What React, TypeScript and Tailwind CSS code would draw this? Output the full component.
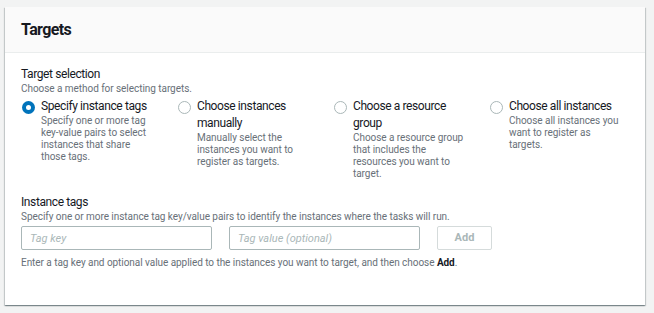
import React, { useState } from 'react';

const options = [
  {
    id: 'tags',
    label: 'Specify instance tags',
    desc: 'Specify one or more tag key-value pairs to select instances that share those tags.',
  },
  {
    id: 'manual',
    label: 'Choose instances manually',
    desc: 'Manually select the instances you want to register as targets.',
  },
  {
    id: 'group',
    label: 'Choose a resource group',
    desc: 'Choose a resource group that includes the resources you want to target.',
  },
  {
    id: 'all',
    label: 'Choose all instances',
    desc: 'Choose all instances you want to register as targets.',
  },
];

const Radio = ({ checked }: { checked: boolean }) =>
  checked ? (
    <span className="mt-[3px] flex h-[13px] w-[13px] shrink-0 items-center justify-center rounded-full bg-[#0073bb]">
      <span className="h-[5px] w-[5px] rounded-full bg-white" />
    </span>
  ) : (
    <span className="mt-[3px] h-[13px] w-[13px] shrink-0 rounded-full border border-[#aab7b8] bg-white" />
  );

export default function App() {
  const [selected, setSelected] = useState('tags');

  return (
    <div className="min-h-screen bg-[#f2f3f3] pl-[5px] pr-[9px] pt-[7px] font-['Roboto',sans-serif] text-[#16191f]">
      <div className="h-[298px] bg-white shadow-[0_1px_1px_0_rgba(0,28,36,0.3),1px_1px_1px_0_rgba(0,28,36,0.15),-1px_1px_1px_0_rgba(0,28,36,0.15)]">
        {/* Header */}
        <div className="flex h-[46px] items-center border-b border-[#eaeded] bg-[#fafafa] px-4 pt-[1px]">
          <h2 className="text-[16px] font-bold leading-none tracking-[-0.6px]">Targets</h2>
        </div>

        <div className="px-4 pt-[14px]">
          <div className="text-[12px] leading-[15px] tracking-[-0.4px]">Target selection</div>
          <div className="text-[10px] leading-[13px] tracking-[-0.05px] text-[#687078]">Choose a method for selecting targets.</div>

          <div className="mt-[3px] grid grid-cols-[156px_156px_156px_1fr]">
            {options.map((o) => (
              <label key={o.id} className="flex cursor-pointer gap-[6px] pl-[1px]" onClick={() => setSelected(o.id)}>
                <Radio checked={selected === o.id} />
                <div className="w-[116px]">
                  <div className="text-[12px] leading-[17px] tracking-[-0.4px]">{o.label}</div>
                  <div className="text-[10px] leading-[12px] tracking-[-0.05px] text-[#687078]">{o.desc}</div>
                </div>
              </label>
            ))}
          </div>

          <div className="mt-[15px] text-[12px] leading-[15px] tracking-[-0.4px]">Instance tags</div>
          <div className="text-[10px] leading-[13px] tracking-[-0.05px] text-[#687078]">
            Specify one or more instance tag key/value pairs to identify the instances where the tasks will run.
          </div>

          <div className="mt-[3px] flex gap-[17px]">
            <input
              placeholder="Tag key"
              className="h-[24px] w-[191px] rounded-[2px] border border-[#aab7b8] px-[8px] text-[11px] italic outline-none placeholder:text-[#aab7b8]"
            />
            <input
              placeholder="Tag value (optional)"
              className="h-[24px] w-[191px] rounded-[2px] border border-[#aab7b8] px-[8px] text-[11px] italic outline-none placeholder:text-[#aab7b8]"
            />
            <button className="h-[24px] w-[55px] rounded-[2px] border border-[#d5dbdb] bg-white text-[11px] font-bold text-[#aab7b8]">
              Add
            </button>
          </div>

          <div className="mt-[6px] text-[10px] leading-[13px] tracking-[-0.05px] text-[#687078]">
            Enter a tag key and optional value applied to the instances you want to target, and then choose{' '}
            <span className="font-bold text-[#16191f]">Add</span>.
          </div>
        </div>
      </div>
    </div>
  );
}
